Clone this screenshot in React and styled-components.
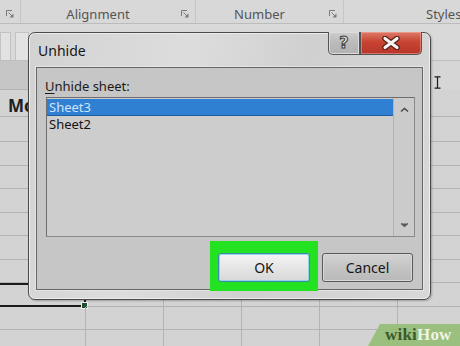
import styled, { createGlobalStyle } from "styled-components";

const GlobalStyle = createGlobalStyle`
  html, body {
    margin: 0;
    padding: 0;
  }
  body {
    width: 460px;
    height: 346px;
    overflow: hidden;
    background: #d3d3d3;
    font-family: "Noto Sans", "Open Sans", sans-serif;
  }
`;

const Screen = styled.div`
  position: relative;
  width: 460px;
  height: 346px;
  overflow: hidden;
  background: #d3d3d3;
  display: flex;
  flex-direction: column;
  & > * {
    flex-shrink: 0;
  }
`;

/* ribbon */

const GroupBar = styled.div`
  display: flex;
  height: 23px;
  background: #d8d8d8;
  border-bottom: 1px solid #bcbcbc;
`;

const Group = styled.div`
  flex: 0 0 ${(p) => p.$w}px;
  display: grid;
  grid-template-columns: 1fr 20px;
  align-items: center;
  box-sizing: border-box;
  padding-top: 5px;
  border-right: 1px solid #c6c6c6;
  font-size: 13px;
  color: #555;
`;

const GroupLabel = styled.span`
  text-align: ${(p) => (p.$start ? "left" : "center")};
  padding-left: ${(p) => p.$pad || 0}px;
  white-space: nowrap;
`;

const LauncherBox = styled.span`
  display: flex;
  justify-content: center;
`;

const RibbonBody = styled.div`
  height: 36px;
  display: flex;
  align-items: flex-end;
  gap: 4px;
  background: #d9d9d9;
  border-bottom: 1px solid #bfbfbf;
`;

const RibbonBox = styled.div`
  width: ${(p) => p.$w}px;
  height: 28px;
  box-sizing: border-box;
  background: #e2e2e2;
  border: 1px solid #c2c2c2;
  border-bottom: none;
`;

const FormulaRow = styled.div`
  height: 29px;
  display: flex;
  background: #d6d6d6;
`;

const NameBox = styled.div`
  width: 90px;
  background: #c6c6c6;
  border-bottom: 1px solid #b3b3b3;
`;

/* sheet grid */

const Grid = styled.div`
  display: grid;
  grid-template-columns: 86px repeat(5, 78px) 1fr;
  grid-template-rows: 27px 25px repeat(9, 23.5px);
`;

const Cell = styled.div`
  position: relative;
  box-sizing: border-box;
  border-right: 1px solid #b3b3b3;
  border-bottom: 1px solid #b3b3b3;
  padding: ${(p) => (p.$header ? "5px 0 0 8px" : "0 0 0 8px")};
  display: flex;
  align-items: center;
  font-size: 17px;
  font-weight: 700;
  color: #202020;
  white-space: nowrap;
  overflow: hidden;
  ${(p) =>
    p.$selected &&
    `
    overflow: visible;
    border: 2px solid #1b1b1b;
    border-left: none;
    &::after {
      content: "";
      position: absolute;
      right: -4px;
      bottom: -4px;
      width: 5px;
      height: 5px;
      background: #1e4d30;
      border: 1px solid #f0f0f0;
    }
  `}
`;

/* dialog */

const Dialog = styled.div`
  position: absolute;
  left: 28px;
  top: 32px;
  width: 403px;
  height: 268px;
  box-sizing: border-box;
  padding: 0 7px 9px 7px;
  border: 1px solid #4b4b4b;
  border-radius: 7px;
  background: linear-gradient(105deg, #d2d2d2 0%, #dddddd 35%, #d0d0d0 60%, #d8d8d8 100%);
  box-shadow: inset 0 0 0 1px #ececec, 1px 1px 2px rgba(0, 0, 0, 0.25);
  display: flex;
  flex-direction: column;
`;

const TitleBar = styled.div`
  height: 34px;
  flex: 0 0 34px;
  display: flex;
  justify-content: space-between;
  align-items: flex-start;
`;

const Title = styled.span`
  padding: 8px 0 0 2px;
  font-size: 14px;
  line-height: 20px;
  color: #151515;
`;

const Captions = styled.div`
  display: flex;
  margin-top: -1px;
  margin-right: 1px;
`;

const CaptionButton = styled.div`
  width: ${(p) => p.$w}px;
  height: 23px;
  box-sizing: border-box;
  border: 1px solid #555;
  border-top: none;
  display: flex;
  align-items: center;
  justify-content: center;
  background: ${(p) =>
    p.$close
      ? "linear-gradient(#dc7a68, #c84432 45%, #b8362a)"
      : "linear-gradient(#cdcdcd, #bababa 50%, #b2b2b2)"};
  border-radius: ${(p) => (p.$close ? "0 0 5px 0" : "0 0 0 5px")};
  box-shadow: inset 0 0 0 1px ${(p) => (p.$close ? "rgba(255,190,180,.45)" : "#dcdcdc")};
`;

const HelpGlyph = styled.span`
  font-family: "DejaVu Sans", sans-serif;
  font-size: 16px;
  font-weight: 700;
  line-height: 1;
  color: #e6e6e6;
  -webkit-text-stroke: 1px #3a3a3a;
`;

const Client = styled.div`
  height: 223px;
  box-sizing: border-box;
  border: 1px solid #676767;
  box-shadow: 0 0 0 1px #e4e4e4;
  background: #c6c6c6;
  padding: 10px 7px 7px 9px;
  display: flex;
  flex-direction: column;
`;

const FieldLabel = styled.label`
  margin-left: -1px;
  margin-bottom: 3px;
  font-size: 13px;
  line-height: 16px;
  color: #1a1a1a;
  u {
    text-decoration-thickness: 1px;
    text-underline-offset: 2px;
  }
`;

const ListBox = styled.div`
  height: 140px;
  box-sizing: border-box;
  border: 1px solid #6e6e6e;
  border-right-color: #8a8a8a;
  border-bottom-color: #8a8a8a;
  background: #cdcdcd;
  display: flex;
`;

const Items = styled.div`
  flex: 1;
  padding-top: 1px;
  display: flex;
  flex-direction: column;
`;

const Item = styled.div`
  height: 17px;
  padding-left: 2px;
  font-size: 13px;
  line-height: 17px;
  color: ${(p) => (p.$selected ? "#cfe4fa" : "#141414")};
  background: ${(p) => (p.$selected ? "#2f7fd2" : "transparent")};
  box-shadow: ${(p) => (p.$selected ? "inset 0 -1px 0 #1f5f9f" : "none")};
`;

const ScrollBar = styled.div`
  width: 21px;
  box-sizing: border-box;
  border-left: 1px solid #b2b2b2;
  background: #cbcbcb;
  display: flex;
  flex-direction: column;
  justify-content: space-between;
  align-items: center;
  padding: 9px 0 8px;
`;

const Buttons = styled.div`
  margin-top: 16px;
  margin-right: 2px;
  display: flex;
  justify-content: flex-end;
  gap: 12px;
`;

const OkWrap = styled.div`
  position: relative;
  z-index: 0;
  &::before {
    content: "";
    position: absolute;
    z-index: -1;
    inset: -12px -8px -9px -8px;
    background: #22e222;
  }
`;

const Button = styled.div`
  width: ${(p) => p.$w}px;
  height: 29px;
  box-sizing: border-box;
  border-radius: 3px;
  display: flex;
  align-items: center;
  justify-content: center;
  font-size: 14px;
  color: #161616;
  border: 1px solid ${(p) => (p.$default ? "#3a8cab" : "#5a5a5a")};
  background: ${(p) =>
    p.$default
      ? "linear-gradient(#f4f4f4, #e6e6e6 50%, #d8d8d8)"
      : "linear-gradient(#d3d3d3, #c4c4c4 50%, #b9b9b9)"};
  box-shadow: inset 0 0 0 1px ${(p) => (p.$default ? "#93d2ea" : "#d8d8d8")};
`;

/* overlays */

const Cursor = styled.svg`
  position: absolute;
  left: 434px;
  top: 76px;
`;

const Watermark = styled.div`
  position: absolute;
  right: 0;
  bottom: 0;
  width: 92px;
  height: 22px;
  box-sizing: border-box;
  padding-left: 17px;
  background: rgba(148, 188, 116, 0.9);
  clip-path: polygon(12px 0, 100% 0, 100% 100%, 0 100%);
  display: flex;
  align-items: center;
  font-family: "Liberation Serif", "DejaVu Serif", serif;
  font-weight: 700;
  font-size: 17px;
  letter-spacing: 0.2px;
`;

const Wiki = styled.span`
  color: #3b5a2c;
`;

const How = styled.span`
  color: #eef3e6;
`;

const Launcher = () => (
  <svg width="8" height="8" viewBox="0 0 8 8">
    <path d="M0.5 6 V0.5 H6" fill="none" stroke="#7a7a7a" strokeWidth="1" />
    <path d="M2.5 2.5 L6.5 6.5" stroke="#7a7a7a" strokeWidth="1" />
    <path d="M7.5 3.5 V7.5 H3.5 Z" fill="#7a7a7a" />
  </svg>
);

const CloseIcon = () => (
  <svg width="20" height="14" viewBox="0 0 20 14">
    <path d="M4 2.5 L16 11.5 M16 2.5 L4 11.5" stroke="#5a1d16" strokeWidth="5.5" strokeLinecap="round" />
    <path d="M4 2.5 L16 11.5 M16 2.5 L4 11.5" stroke="#f4f4f4" strokeWidth="3.2" strokeLinecap="round" />
  </svg>
);

const Chevron = ({ down }) => (
  <svg width="9" height="6" viewBox="0 0 9 6">
    {down ? (
      <path d="M1 1.5 L4.5 4.5 L8 1.5" fill="#5a5a5a" stroke="#5a5a5a" strokeWidth="1.2" />
    ) : (
      <path d="M1 4.5 L4.5 1.5 L8 4.5" fill="none" stroke="#444" strokeWidth="1.4" />
    )}
  </svg>
);

const ROWS = 11;
const COLS = 7;

export default function App() {
  const cells = [];
  for (let r = 0; r < ROWS; r++) {
    for (let c = 0; c < COLS; c++) {
      cells.push(
        <Cell key={`${r}-${c}`} $header={r === 0} $selected={r === 8 && c === 0}>
          {r === 0 && c === 0 ? "Mo" : null}
        </Cell>
      );
    }
  }

  return (
    <Screen>
      <GlobalStyle />
      <GroupBar>
        <Group $w={20}>
          <span />
          <LauncherBox>
            <Launcher />
          </LauncherBox>
        </Group>
        <Group $w={175}>
          <GroupLabel>Alignment</GroupLabel>
          <LauncherBox>
            <Launcher />
          </LauncherBox>
        </Group>
        <Group $w={148}>
          <GroupLabel>Number</GroupLabel>
          <LauncherBox>
            <Launcher />
          </LauncherBox>
        </Group>
        <Group $w={200}>
          <GroupLabel $start $pad={82}>Styles</GroupLabel>
        </Group>
      </GroupBar>

      <RibbonBody>
        <RibbonBox $w={11} />
        <RibbonBox $w={14} />
      </RibbonBody>

      <FormulaRow>
        <NameBox />
      </FormulaRow>

      <Grid>{cells}</Grid>

      <Cursor width="7" height="13" viewBox="0 0 7 13">
        <path d="M0.5 0.8 H6.5 M3.5 0.8 V12.2 M0.5 12.2 H6.5" stroke="#1a1a1a" strokeWidth="1.2" fill="none" />
      </Cursor>

      <Dialog>
        <TitleBar>
          <Title>Unhide</Title>
          <Captions>
            <CaptionButton $w={32}>
              <HelpGlyph>?</HelpGlyph>
            </CaptionButton>
            <CaptionButton $w={62} $close>
              <CloseIcon />
            </CaptionButton>
          </Captions>
        </TitleBar>

        <Client>
          <FieldLabel>
            <u>U</u>nhide sheet:
          </FieldLabel>
          <ListBox>
            <Items>
              <Item $selected>Sheet3</Item>
              <Item>Sheet2</Item>
            </Items>
            <ScrollBar>
              <Chevron />
              <Chevron down />
            </ScrollBar>
          </ListBox>
          <Buttons>
            <OkWrap>
              <Button $w={92} $default>OK</Button>
            </OkWrap>
            <Button $w={91}>Cancel</Button>
          </Buttons>
        </Client>
      </Dialog>

      <Watermark>
        <Wiki>wiki</Wiki>
        <How>How</How>
      </Watermark>
    </Screen>
  );
}
